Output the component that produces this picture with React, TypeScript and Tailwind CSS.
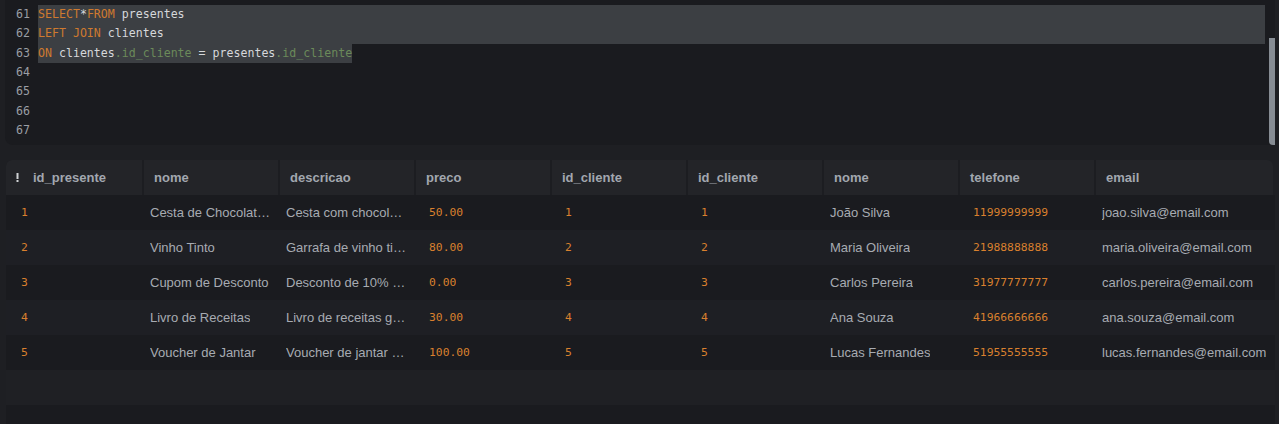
import React from "react"

const mono = { fontFamily: '"DejaVu Sans Mono", "Liberation Mono", monospace' }

const columns = [
  "id_presente",
  "nome",
  "descricao",
  "preco",
  "id_cliente",
  "id_cliente",
  "nome",
  "telefone",
  "email",
]

type Row = {
  idPresente: string
  nome: string
  descricao: string
  preco: string
  idCliente: string
  idCliente2: string
  cliente: string
  telefone: string
  email: string
}

const rows: Row[] = [
  { idPresente: "1", nome: "Cesta de Chocolates", descricao: "Cesta com chocolates finos", preco: "50.00", idCliente: "1", idCliente2: "1", cliente: "João Silva", telefone: "11999999999", email: "joao.silva@email.com" },
  { idPresente: "2", nome: "Vinho Tinto", descricao: "Garrafa de vinho tinto", preco: "80.00", idCliente: "2", idCliente2: "2", cliente: "Maria Oliveira", telefone: "21988888888", email: "maria.oliveira@email.com" },
  { idPresente: "3", nome: "Cupom de Desconto", descricao: "Desconto de 10% em compras", preco: "0.00", idCliente: "3", idCliente2: "3", cliente: "Carlos Pereira", telefone: "31977777777", email: "carlos.pereira@email.com" },
  { idPresente: "4", nome: "Livro de Receitas", descricao: "Livro de receitas gourmet", preco: "30.00", idCliente: "4", idCliente2: "4", cliente: "Ana Souza", telefone: "41966666666", email: "ana.souza@email.com" },
  { idPresente: "5", nome: "Voucher de Jantar", descricao: "Voucher de jantar para dois", preco: "100.00", idCliente: "5", idCliente2: "5", cliente: "Lucas Fernandes", telefone: "51955555555", email: "lucas.fernandes@email.com" },
]

const Kw = ({ children }: { children: React.ReactNode }) => (
  <span className="text-[#cf7a2f]">{children}</span>
)
const Field = ({ children }: { children: React.ReactNode }) => (
  <span className="text-[#6b8a5a]">{children}</span>
)

const EditorLine = ({ n, children, full }: { n: number; children?: React.ReactNode; full?: boolean }) => (
  <div className="flex h-[19.33px] items-center">
    <div className="w-[33px] shrink-0 pr-[8px] text-right text-[#9a9ea4]">{n}</div>
    <div className={"flex h-full flex-1 items-center " + (full ? "bg-[#3c3f43]" : "")}>
      {children}
    </div>
  </div>
)

const NumCell = ({ v }: { v: string }) => (
  <div className="flex min-w-0 items-center overflow-hidden px-[15px] text-[11.33px] text-[#d9802e]" style={mono}>
    <span className="truncate">{v}</span>
  </div>
)

const TextCell = ({ v }: { v: string }) => (
  <div className="flex min-w-0 items-center overflow-hidden px-[8px]">
    <span className="truncate">{v}</span>
  </div>
)

export default function App() {
  return (
    <div
      className="h-[424px] w-[1279px] overflow-hidden bg-[#1e1f23]"
      style={{ fontFamily: '"Liberation Sans", Arial, sans-serif' }}
    >
      {/* editor */}
      <div className="relative ml-[5px] h-[145px] w-[1270px] rounded-bl-lg bg-[#1a1b1f] pt-[5px] pr-[10px] text-[11.6px] text-[#d6d8db]" style={mono}>
        <EditorLine n={61} full>
          <Kw>SELECT</Kw>*<Kw>FROM</Kw>&nbsp;presentes
        </EditorLine>
        <EditorLine n={62} full>
          <Kw>LEFT JOIN</Kw>&nbsp;clientes
        </EditorLine>
        <EditorLine n={63}>
          <span className="flex h-full items-center bg-[#3c3f43] whitespace-pre">
            <Kw>ON</Kw> clientes<Field>.id_cliente</Field> = presentes<Field>.id_cliente</Field>
          </span>
        </EditorLine>
        <EditorLine n={64} />
        <EditorLine n={65} />
        <EditorLine n={66} />
        <EditorLine n={67} />
        <div className="absolute top-[38px] right-0 h-[107px] w-[6px] rounded-bl-sm bg-[#878d94]" />
      </div>

      {/* result grid */}
      <div className="mt-[15px] ml-[6px] w-[1269px] overflow-hidden rounded-t-md text-[13px] text-[#a7abb2]">
        <div className="mr-[2px] grid h-[35px] grid-cols-[repeat(8,136px)_1fr] overflow-hidden rounded-t-md bg-[#232428]">
          {columns.map((c, i) => (
            <div
              key={i}
              className={
                "flex items-center pl-[10px] font-bold text-[#a2a7af] " +
                (i === 0 ? "" : "border-l-2 border-[#1c1d21]")
              }
            >
              {i === 0 && (
                <svg width="3" height="9" viewBox="0 0 3 9" className="mr-[14px]">
                  <rect x="0.5" y="0" width="2" height="6" fill="#cfd1d4" />
                  <rect x="0.5" y="7" width="2" height="2" fill="#cfd1d4" />
                </svg>
              )}
              {c}
            </div>
          ))}
        </div>
        {rows.map((r, i) => (
          <div
            key={i}
            className={
              "grid h-[35px] grid-cols-[repeat(8,136px)_1fr] " +
              (i % 2 === 0 ? "bg-[#1a1b1f]" : "bg-[#1e1f24]")
            }
          >
            <NumCell v={r.idPresente} />
            <TextCell v={r.nome} />
            <TextCell v={r.descricao} />
            <NumCell v={r.preco} />
            <NumCell v={r.idCliente} />
            <NumCell v={r.idCliente2} />
            <TextCell v={r.cliente} />
            <NumCell v={r.telefone} />
            <TextCell v={r.email} />
          </div>
        ))}
        <div className="h-[35px] bg-[#1f2024]" />
        <div className="h-[35px] bg-[#1a1b1f]" />
      </div>
    </div>
  )
}
